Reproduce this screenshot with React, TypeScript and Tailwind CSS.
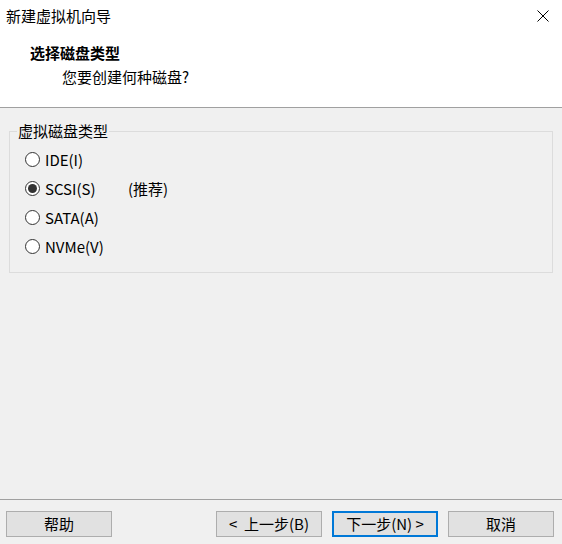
import React from "react";

const font = { fontFamily: '"Noto Sans CJK SC", "Noto Sans", sans-serif' };

function Radio({ label, checked, extra }: { label: string; checked?: boolean; extra?: string }) {
  return (
    <div className="flex items-center h-[29px]">
      <span className="w-[15px] h-[15px] min-w-[15px] rounded-full border border-[#333333] bg-white flex items-center justify-center shrink-0">
        {checked && <span className="w-[9px] h-[9px] rounded-full bg-[#333333]" />}
      </span>
      <span className="ml-[5px] text-[15px] leading-[20px] text-black w-[83px]">{label}</span>
      {extra && <span className="text-[15px] leading-[20px] text-black">{extra}</span>}
    </div>
  );
}

function Btn({ children, primary }: { children: React.ReactNode; primary?: boolean }) {
  return (
    <button
      className={
        "w-[106px] h-[26px] bg-[#e1e1e1] flex items-center justify-center text-[15px] leading-[20px] text-black " +
        (primary ? "border-2 border-[#0078d7]" : "border border-[#adadad]")
      }
    >
      {children}
    </button>
  );
}

export default function App() {
  return (
    <div className="w-[562px] h-[544px] bg-[#f0f0f0] flex flex-col overflow-hidden" style={font}>
      <div className="h-[108px] bg-white border-b border-[#a0a0a0] flex flex-col shrink-0">
        <div className="h-[32px] flex items-center justify-between pl-[6px] pr-[13px]">
          <span className="text-[15px] leading-[20px] text-black">新建虚拟机向导</span>
          <svg width="12" height="12" viewBox="0 0 12 12">
            <path d="M0.5 0.5 L11.5 11.5 M11.5 0.5 L0.5 11.5" stroke="#000" strokeWidth="1" />
          </svg>
        </div>
        <div className="mt-[11px] pl-[30px] text-[15px] leading-[20px] font-bold text-black">选择磁盘类型</div>
        <div className="mt-[4px] pl-[62px] text-[15px] leading-[20px] text-black">您要创建何种磁盘?</div>
      </div>
      <div className="flex-1 pt-[23px] pl-[9px]">
        <div className="relative w-[544px] h-[142px] border border-[#dcdcdc] pl-[15px] pt-[13px]">
          <span className="absolute left-[7px] top-[-11px] px-[1px] bg-[#f0f0f0] text-[15px] leading-[20px] text-black">
            虚拟磁盘类型
          </span>
          <Radio label="IDE(I)" />
          <Radio label="SCSI(S)" checked extra="(推荐)" />
          <Radio label="SATA(A)" />
          <Radio label="NVMe(V)" />
        </div>
      </div>
      <div className="h-[45px] border-t border-[#a0a0a0] pt-[11px] px-[6px] flex shrink-0">
        <Btn>帮助</Btn>
        <div className="flex-1" />
        <div className="flex gap-[10px] pr-[2px]">
          <Btn>&lt;&nbsp; 上一步(B)</Btn>
          <Btn primary>下一步(N) &gt;</Btn>
          <Btn>取消</Btn>
        </div>
      </div>
    </div>
  );
}
